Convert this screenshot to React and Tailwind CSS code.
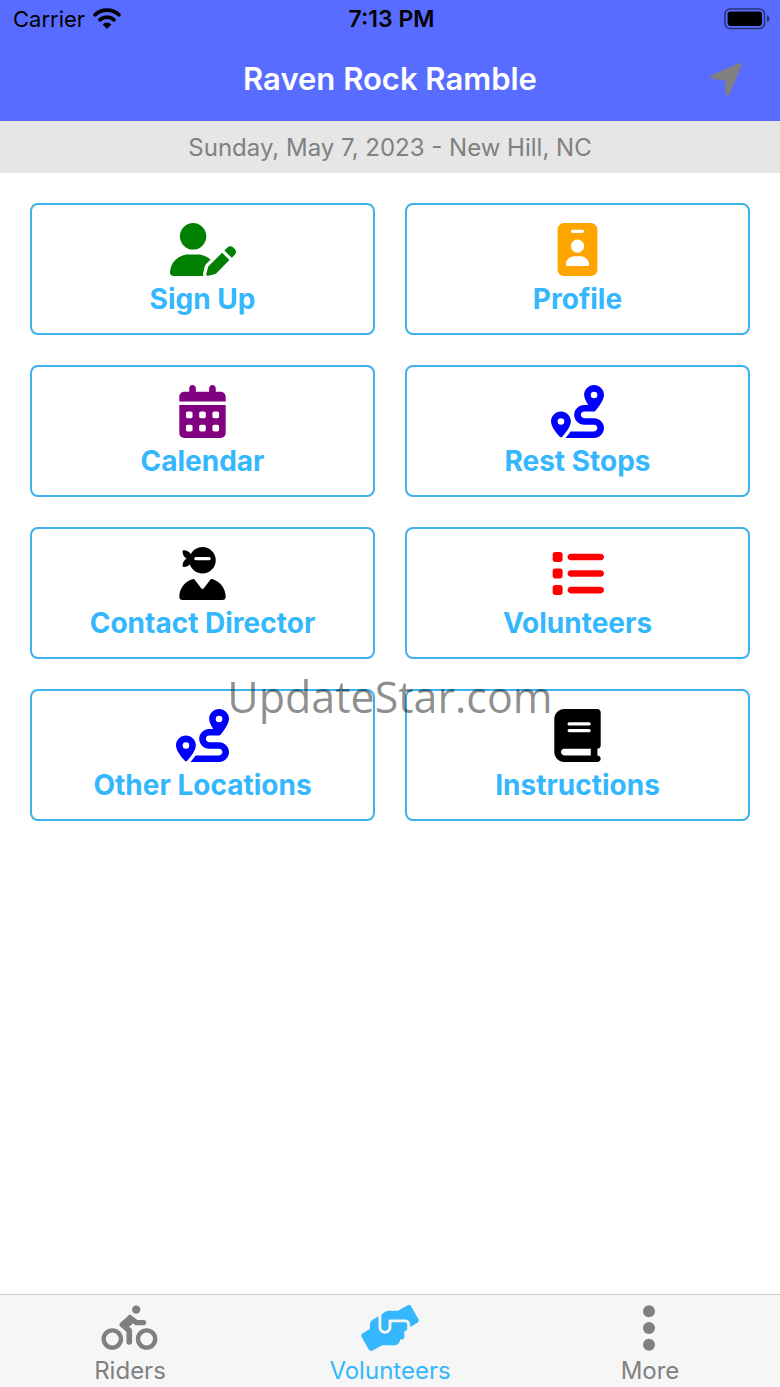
import React, { useState } from "react";
import {
  FaUserPen,
  FaIdBadge,
  FaCalendarDays,
  FaRoute,
  FaUserNinja,
  FaList,
  FaBook,
} from "react-icons/fa6";
import { FaHandsHelping } from "react-icons/fa";

const menuItems = [
  { label: "Sign Up", icon: FaUserPen, size: "w-[66px]", color: "text-[#008000]" },
  { label: "Profile", icon: FaIdBadge, size: "w-[53px]", color: "text-[#ffa500]" },
  { label: "Calendar", icon: FaCalendarDays, size: "w-[53px]", color: "text-[#800080]" },
  { label: "Rest Stops", icon: FaRoute, size: "w-[53px]", color: "text-[#0000ff]" },
  { label: "Contact Director", icon: FaUserNinja, size: "w-[53px]", color: "text-black" },
  { label: "Volunteers", icon: FaList, size: "w-[53px]", color: "text-[#ff0000]" },
  { label: "Other Locations", icon: FaRoute, size: "w-[53px]", color: "text-[#0000ff]" },
  { label: "Instructions", icon: FaBook, size: "w-[53px]", color: "text-black" },
];

const WifiIcon = () => (
  <svg viewBox="0 0 28 22" className="w-7 h-[22px]" aria-hidden="true">
    <g fill="none" stroke="currentColor" strokeWidth="3.8" strokeLinecap="round">
      <path d="M2.2 6.7C8.8 0.6 19.2 0.6 25.8 6.7" />
      <path d="M7 11.7C11 8.2 17 8.2 21 11.7" />
    </g>
    <path d="M14 20.4L10.2 16.6C12.2 14.6 15.8 14.6 17.8 16.6Z" fill="currentColor" stroke="currentColor" strokeLinejoin="round" />
  </svg>
);

const BatteryIcon = () => (
  <svg viewBox="0 0 46 22" className="w-[46px] h-[22px]" aria-hidden="true">
    <rect x="1" y="1" width="39.5" height="19.5" rx="5" fill="none" stroke="#000" strokeOpacity="0.55" strokeWidth="1.6" />
    <rect x="3.6" y="3.6" width="34.4" height="14.3" rx="2.8" fill="#000" />
    <path d="M43 7.2C46.2 8.5 46.2 12.9 43 14.2Z" fill="#000" fillOpacity="0.55" />
  </svg>
);

const LocationIcon = () => (
  <svg viewBox="0 0 32 33" className="w-8 h-[33px]" aria-hidden="true">
    <path
      d="M29.5 2.2L2.4 14L15.8 15.2Q16.8 15.4 16.8 16.4L17.6 30.4Z"
      fill="currentColor"
      stroke="currentColor"
      strokeWidth="4"
      strokeLinejoin="round"
    />
  </svg>
);

const BikeIcon = ({ className }) => (
  <svg
    viewBox="0 0 58 46"
    className={className}
    fill="none"
    stroke="currentColor"
    strokeLinecap="round"
    strokeLinejoin="round"
    aria-hidden="true"
  >
    <circle cx="35.2" cy="4.6" r="4.2" fill="currentColor" stroke="none" />
    <g strokeWidth="4.4">
      <circle cx="11.3" cy="34" r="8.6" />
      <circle cx="45.6" cy="34" r="8.6" />
    </g>
    <path d="M29 12.6L35.4 17.6H42.6" strokeWidth="5.2" />
    <path d="M29 13L21.4 19.6L28.3 25.6V37" strokeWidth="5.6" />
    <path d="M29 13L31.6 16L26 21L22 19.4Z" fill="currentColor" strokeWidth="4" />
  </svg>
);

const MoreIcon = ({ className }) => (
  <svg viewBox="0 0 58 46" className={className} fill="currentColor" aria-hidden="true">
    <circle cx="28" cy="6.3" r="6" />
    <circle cx="28" cy="23" r="6" />
    <circle cx="28" cy="39.7" r="6" />
  </svg>
);

const tabs = [
  { label: "Riders", icon: BikeIcon },
  { label: "Volunteers", icon: FaHandsHelping },
  { label: "More", icon: MoreIcon },
];

const App = () => {
  const [activeTab, setActiveTab] = useState("Volunteers");

  return (
    <div className="relative min-h-screen flex flex-col bg-white font-['Inter',sans-serif]">
      {/* Header */}
      <header className="bg-[#586dff]">
        <div className="grid grid-cols-3 items-center h-[38px] pl-[13px] pr-2.5 text-[22px] text-black">
          <div className="flex items-center gap-2">
            <span>Carrier</span>
            <WifiIcon />
          </div>
          <span className="text-center text-[23px] font-semibold">7:13 PM</span>
          <div className="flex justify-end">
            <BatteryIcon />
          </div>
        </div>
        <div className="grid grid-cols-[1fr_auto_1fr] items-center h-[83px] px-[38px]">
          <h1 className="col-start-2 text-[31px] font-semibold text-white">
            Raven Rock Ramble
          </h1>
          <button aria-label="My location" className="justify-self-end text-[#808080]">
            <LocationIcon />
          </button>
        </div>
      </header>

      <p className="flex items-center justify-center h-13 pt-0.5 bg-[#e6e6e6] text-2xl text-[#808080]">
        Sunday, May 7, 2023 - New Hill, NC
      </p>

      {/* Menu */}
      <main className="flex-1">
        <div className="grid grid-cols-2 gap-[30px] p-[30px]">
          {menuItems.map(({ label, icon: Icon, size, color }) => (
            <button
              key={label}
              className="flex flex-col items-center h-[132px] pt-[18px] border-2 border-[#3db2ec] rounded-lg"
            >
              <Icon className={`h-[53px] ${size} ${color}`} />
              <span className="mt-[3px] text-[28px] leading-10 font-bold text-[#34b7fc]">
                {label}
              </span>
            </button>
          ))}
        </div>
      </main>

      {/* Tab bar */}
      <nav className="grid grid-cols-3 h-[93px] bg-[#f6f6f6] border-t border-[#cccccc]">
        {tabs.map(({ label, icon: Icon }) => (
          <button
            key={label}
            onClick={() => setActiveTab(label)}
            className={`flex flex-col items-center pt-2.5 ${
              activeTab === label ? "text-[#34b7fc]" : "text-[#808080]"
            }`}
          >
            <Icon className="w-[58px] h-[46px]" />
            <span className="mt-1 text-2xl leading-8">{label}</span>
          </button>
        ))}
      </nav>

      {/* Watermark */}
      <div className="absolute inset-0 pt-2 flex items-center justify-center pointer-events-none">
        <span className="font-['Open_Sans',sans-serif] text-[43px] text-black/45">
          UpdateStar.com
        </span>
      </div>
    </div>
  );
};

export default App;
